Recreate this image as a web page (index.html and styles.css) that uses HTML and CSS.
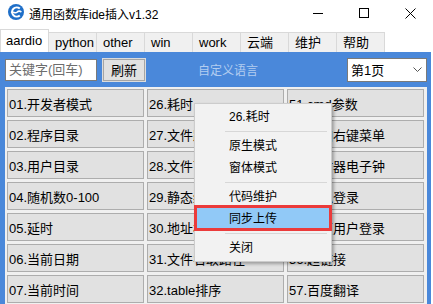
FILE: index.html
```html
<!DOCTYPE html>
<html lang="zh-CN">
<head>
    <meta charset="UTF-8">
    <title>通用函数库ide插入v1.32</title>
    <link rel="stylesheet" href="styles.css">
</head>
<body>
    <div class="titlebar">
        <svg class="app-icon" width="16" height="16" viewBox="0 0 16 16">
            <circle cx="8" cy="8" r="8" fill="#1f6fc8"/>
            <path d="M11.8 4.6 A4.6 4.6 0 1 0 11.8 11.4" fill="none" stroke="#fff" stroke-width="2"/>
            <path d="M3.2 8.6 C5 6.6 7 10.2 9 8.2 S12 7 13.4 8" fill="none" stroke="#fff" stroke-width="1.6"/>
        </svg>
        <span class="title">通用函数库ide插入v1.32</span>
        <div class="win-ctrls">
            <span class="ctrl"><svg width="10" height="10" viewBox="0 0 10 10"><path d="M0 5.5H10" stroke="#000" stroke-width="1"/></svg></span>
            <span class="ctrl"><svg width="10" height="10" viewBox="0 0 10 10"><rect x="0.5" y="0.5" width="9" height="9" fill="none" stroke="#000" stroke-width="1"/></svg></span>
            <span class="ctrl"><svg width="11" height="11" viewBox="0 0 11 11"><path d="M0.5 0.5L10.5 10.5M10.5 0.5L0.5 10.5" stroke="#000" stroke-width="1"/></svg></span>
        </div>
    </div>

    <div class="tabs">
        <div class="tab active">aardio</div>
        <div class="tab">python</div>
        <div class="tab">other</div>
        <div class="tab">win</div>
        <div class="tab">work</div>
        <div class="tab">云端</div>
        <div class="tab">维护</div>
        <div class="tab">帮助</div>
    </div>

    <div class="main">
        <div class="toolbar">
            <input class="search" type="text" placeholder="关键字(回车)">
            <button class="btn-refresh">刷新</button>
            <span class="lang">自定义语言</span>
            <div class="page-select">
                <span>第1页</span>
                <svg width="9" height="5" viewBox="0 0 9 5"><path d="M0.5 0.5L4.5 4.5L8.5 0.5" fill="none" stroke="#555" stroke-width="1"/></svg>
            </div>
        </div>
        <div class="panel">
            <div class="grid">
                <div class="cell">01.开发者模式</div>
                <div class="cell">02.程序目录</div>
                <div class="cell">03.用户目录</div>
                <div class="cell">04.随机数0-100</div>
                <div class="cell">05.延时</div>
                <div class="cell">06.当前日期</div>
                <div class="cell">07.当前时间</div>

                <div class="cell">26.耗时</div>
                <div class="cell">27.文件路径</div>
                <div class="cell">28.文件下载</div>
                <div class="cell">29.静态编译</div>
                <div class="cell">30.地址栏</div>
                <div class="cell">31.文件名取路径</div>
                <div class="cell">32.table排序</div>

                <div class="cell">51.cmd参数</div>
                <div class="cell">52.添加右键菜单</div>
                <div class="cell">53.计时器电子钟</div>
                <div class="cell">54.模拟登录</div>
                <div class="cell">55.网页用户登录</div>
                <div class="cell">56.超链接</div>
                <div class="cell">57.百度翻译</div>
            </div>
        </div>
    </div>

    <div class="menu">
        <div class="menu-item">26.耗时</div>
        <div class="menu-sep"></div>
        <div class="menu-item">原生模式</div>
        <div class="menu-item">窗体模式</div>
        <div class="menu-sep"></div>
        <div class="menu-item">代码维护</div>
        <div class="menu-item hover">同步上传</div>
        <div class="menu-sep"></div>
        <div class="menu-item">关闭</div>
    </div>
</body>
</html>
```

FILE: styles.css
```css
body {
    margin: 0;
    width: 433px;
    height: 304px;
    overflow: hidden;
    background-color: #fff;
    font-family: "Liberation Sans", "Noto Sans CJK SC", sans-serif;
    font-size: 13px;
    color: #000;
    position: relative;
}
.titlebar {
    height: 26px;
    display: flex;
    align-items: center;
}
.app-icon {
    margin-left: 8px;
    margin-top: -2px;
}
.title {
    margin-left: 5px;
    font-size: 12px;
    margin-top: 1px;
}
.win-ctrls {
    margin-left: auto;
    display: flex;
    height: 26px;
}
.ctrl {
    width: 46px;
    height: 26px;
    display: flex;
    align-items: center;
    justify-content: center;
}
.tabs {
    height: 26px;
    display: flex;
    align-items: flex-end;
}
.tab {
    width: 48px;
    height: 20px;
    box-sizing: border-box;
    padding-left: 6px;
    line-height: 19px;
    background-color: #f0f0f0;
    border: 1px solid #d9d9d9;
    border-left: none;
    border-bottom: none;
}
.tab.active {
    width: 49px;
    height: 23px;
    line-height: 22px;
    background-color: #fff;
    border-left: 1px solid #d9d9d9;
    padding-left: 5px;
}
.main {
    width: 431px;
    height: 252px;
    box-sizing: border-box;
    background-color: #4a88da;
    padding: 0 4px 0 5px;
}
.toolbar {
    height: 35px;
    display: flex;
    align-items: center;
}
.search {
    width: 92px;
    height: 22px;
    box-sizing: border-box;
    border: 1px solid #7a7a7a;
    padding: 0 0 0 3px;
    font-family: inherit;
    font-size: 13px;
    outline: none;
}
.search::placeholder {
    color: #6d6d6d;
}
.btn-refresh {
    margin-left: 5px;
    width: 44px;
    height: 24px;
    box-sizing: border-box;
    padding: 0;
    font-family: inherit;
    font-size: 13px;
    color: #000;
    background-color: #e1e1e1;
    border: 1px solid #dcdcdc;
    box-shadow: inset 0 0 0 1px #a5a5a5;
}
.lang {
    margin-left: 52px;
    font-size: 12px;
    color: #b3cdf0;
}
.page-select {
    margin-left: auto;
    width: 80px;
    height: 24px;
    box-sizing: border-box;
    background-color: #fff;
    border: 1px solid #7a7a7a;
    display: flex;
    align-items: center;
    justify-content: space-between;
    padding: 0 4px 0 3px;
}
.panel {
    background-color: #f0f0f0;
    padding: 2px 3px 2px 2px;
    height: 217px;
    box-sizing: border-box;
}
.grid {
    display: grid;
    grid-template-columns: repeat(3, 137px);
    grid-template-rows: repeat(7, 28px);
    grid-auto-flow: column;
    gap: 3px;
}
.cell {
    box-sizing: border-box;
    border: 1px solid #adadad;
    background-color: #e1e1e1;
    padding-left: 1px;
    display: flex;
    align-items: center;
    white-space: nowrap;
    overflow: hidden;
}
.menu {
    position: absolute;
    left: 194px;
    top: 103px;
    width: 138px;
    box-sizing: border-box;
    background-color: #f2f2f2;
    border: 1px solid #cccccc;
    padding: 2px 0;
    box-shadow: 2px 2px 3px rgba(0, 0, 0, 0.3);
    font-size: 12px;
}
.menu-item {
    height: 22px;
    line-height: 22px;
    padding-left: 34px;
    position: relative;
}
.menu-item.hover {
    background-color: #91c9f7;
}
.menu-item.hover::after {
    content: "";
    position: absolute;
    left: -1px;
    right: -1px;
    top: -3px;
    bottom: -1px;
    border: 3px solid #eb3b3b;
}
.menu-sep {
    height: 1px;
    margin: 3px 4px 3px 30px;
    background-color: #d7d7d7;
}
```
